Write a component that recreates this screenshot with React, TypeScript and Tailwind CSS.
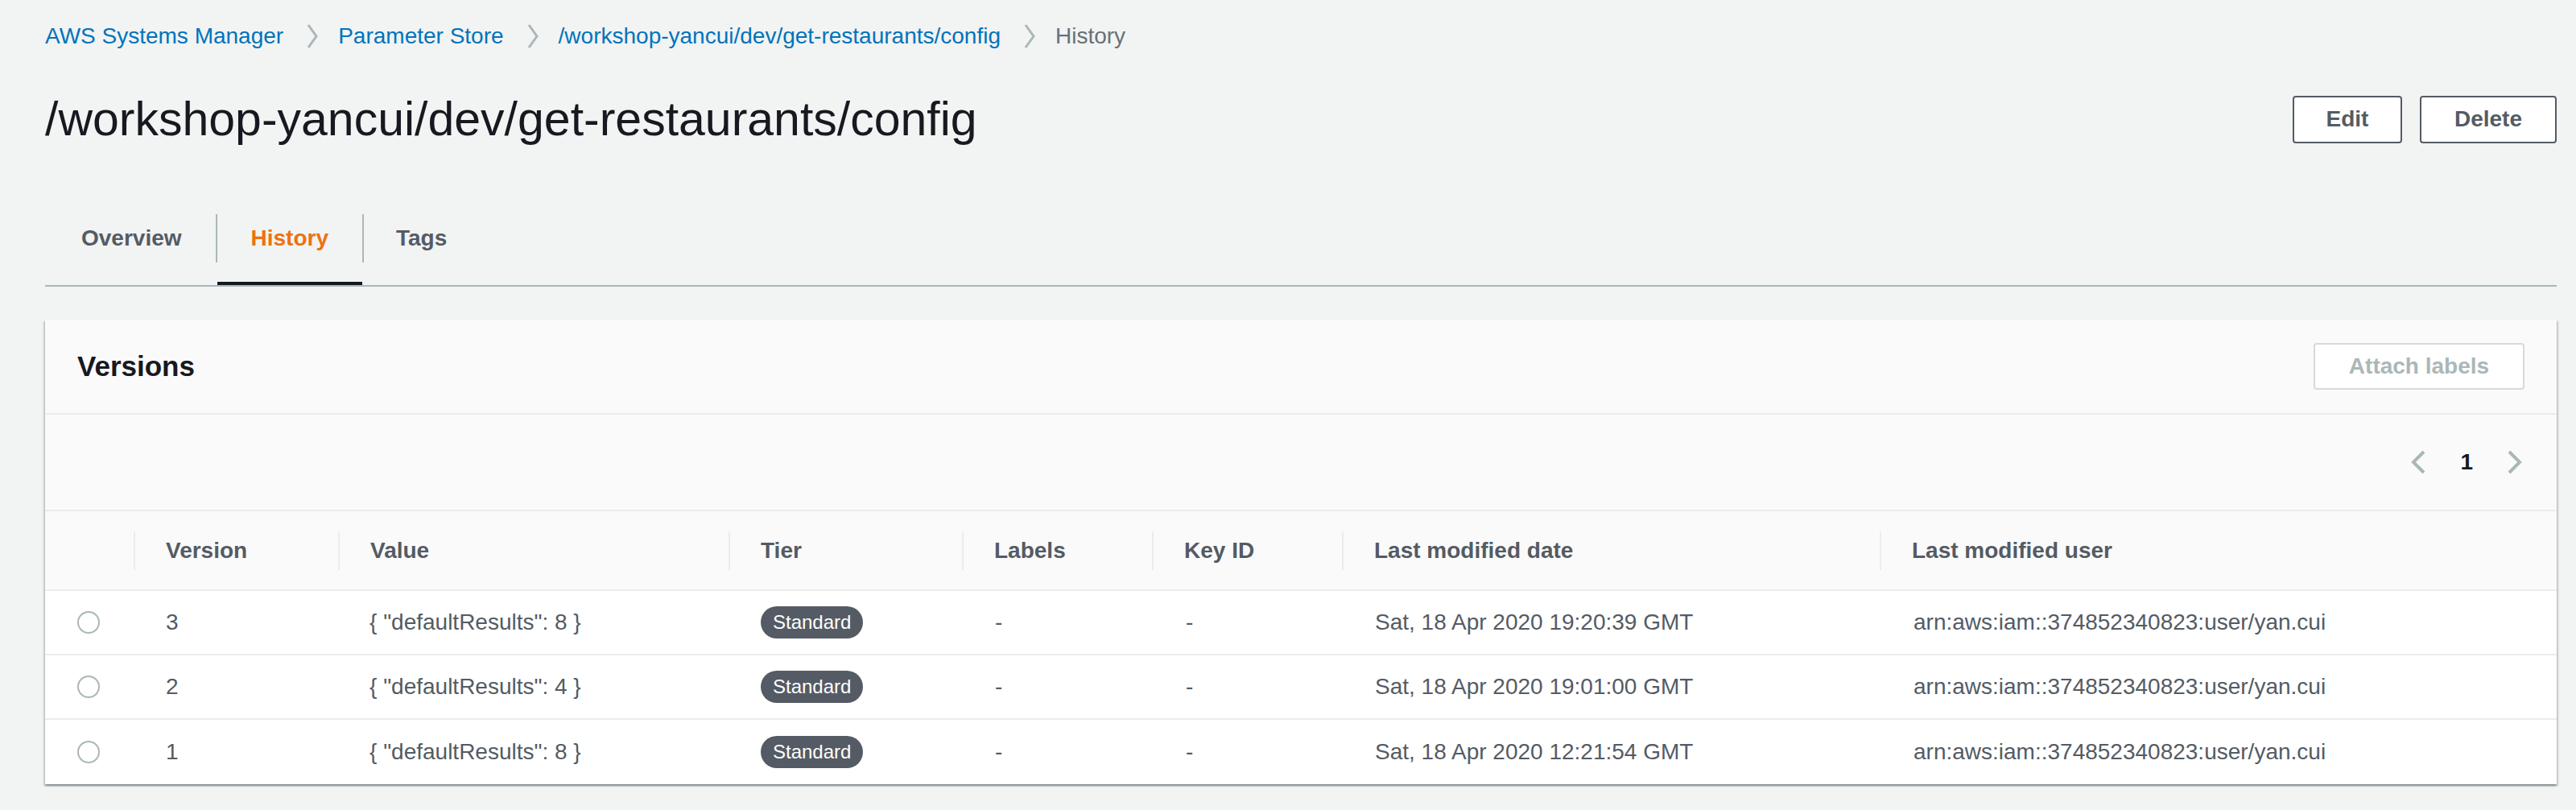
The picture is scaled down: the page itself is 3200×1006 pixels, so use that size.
import React from "react";

const Chevron = () => (
  <svg width="20" height="32" viewBox="0 0 20 32" className="shrink-0">
    <polyline points="5,2 15,16 5,30" fill="none" stroke="#aab7b8" strokeWidth="3" />
  </svg>
);

const rows = [
  { v: "3", val: '{ "defaultResults": 8 }', date: "Sat, 18 Apr 2020 19:20:39 GMT" },
  { v: "2", val: '{ "defaultResults": 4 }', date: "Sat, 18 Apr 2020 19:01:00 GMT" },
  { v: "1", val: '{ "defaultResults": 8 }', date: "Sat, 18 Apr 2020 12:21:54 GMT" },
];

const headers = ["Version", "Value", "Tier", "Labels", "Key ID", "Last modified date", "Last modified user"];

const cols = "grid grid-cols-[110px_254px_485px_290px_236px_236px_668px_1fr]";

export default function App() {
  return (
    <div className="min-h-[1006px] w-[3200px] bg-[#f2f3f3] pl-[56px] pr-[24px] pt-[25px] font-['Liberation_Sans',Arial,sans-serif] text-[28px]">
      {/* Breadcrumb */}
      <div className="flex h-[40px] items-center text-[28px] leading-[40px]">
        <span className="text-[#0073bb]">AWS Systems Manager</span>
        <span className="ml-[26px] mr-[22px] flex items-center"><Chevron /></span>
        <span className="text-[#0073bb]">Parameter Store</span>
        <span className="ml-[26px] mr-[22px] flex items-center"><Chevron /></span>
        <span className="text-[#0073bb]">/workshop-yancui/dev/get-restaurants/config</span>
        <span className="ml-[26px] mr-[22px] flex items-center"><Chevron /></span>
        <span className="text-[#687078]">History</span>
      </div>

      {/* Title row */}
      <div className="mt-[53px] flex h-[60px] items-center justify-between">
        <h1 className="text-[59px] leading-[60px] text-[#16191f] font-normal">/workshop-yancui/dev/get-restaurants/config</h1>
        <div className="flex gap-[22px]">
          <button className="h-[59px] w-[136px] rounded-[4px] border-2 border-[#545b64] bg-white text-[28px] font-bold text-[#545b64]">Edit</button>
          <button className="h-[59px] w-[170px] rounded-[4px] border-2 border-[#545b64] bg-white text-[28px] font-bold text-[#545b64]">Delete</button>
        </div>
      </div>

      {/* Tabs */}
      <div className="mt-[60px] flex border-b-2 border-[#aab7b8]">
        <div className="flex h-[116px] items-center pl-[45px] pr-[42px] font-bold text-[#545b64]">Overview</div>
        <div className="h-[60px] w-[2px] self-center bg-[#aab7b8]" />
        <div className="relative flex h-[116px] items-center px-[42px] font-bold text-[#ec7211]">
          History
          <div className="absolute bottom-0 left-0 right-0 h-[4px] bg-[#16191f]" />
        </div>
        <div className="h-[60px] w-[2px] self-center bg-[#aab7b8]" />
        <div className="flex h-[116px] items-center px-[40px] font-bold text-[#545b64]">Tags</div>
      </div>

      {/* Panel */}
      <div className="mt-[41px] bg-white shadow-[0_2px_2px_0_rgba(0,28,36,0.3),2px_2px_2px_0_rgba(0,28,36,0.15),-2px_2px_2px_0_rgba(0,28,36,0.15)]">
        <div className="flex h-[118px] items-center justify-between border-b-2 border-[#eaeded] bg-[#fafafa] px-[40px]">
          <h2 className="text-[35px] font-bold text-[#16191f]">Versions</h2>
          <button className="h-[58px] w-[262px] rounded-[4px] border-2 border-[#d5dbdb] bg-white text-[28px] font-bold text-[#aab7b8]">Attach labels</button>
        </div>
        <div className="flex h-[120px] items-center justify-end gap-[42px] border-b-2 border-[#eaeded] bg-[#fafafa] pr-[42px]">
          <svg width="20" height="32" viewBox="0 0 20 32">
            <polyline points="17,3 4,16 17,29" fill="none" stroke="#aab7b8" strokeWidth="4" />
          </svg>
          <span className="font-bold text-[#16191f]">1</span>
          <svg width="20" height="32" viewBox="0 0 20 32">
            <polyline points="3,3 16,16 3,29" fill="none" stroke="#aab7b8" strokeWidth="4" />
          </svg>
        </div>
        <div className={`${cols} h-[99px] border-b-2 border-[#eaeded] bg-[#fafafa]`}>
          <div />
          {headers.map((h) => (
            <div key={h} className="flex items-center">
              <span className="h-[48px] w-[2px] bg-[#eaeded]" />
              <span className="ml-[38px] font-bold text-[#545b64]">{h}</span>
            </div>
          ))}
        </div>
        {rows.map((r, i) => (
          <div key={r.v} className={`${cols} h-[80px] text-[#545b64] ${i < rows.length - 1 ? "border-b-2 border-[#eaeded]" : ""}`}>
            <div className="flex items-center pl-[40px]">
              <span className="h-[28px] w-[28px] rounded-full border-2 border-[#aab7b8] bg-white" />
            </div>
            <div className="flex items-center pl-[40px]">{r.v}</div>
            <div className="flex items-center pl-[39px]">{r.val}</div>
            <div className="flex items-center pl-[40px]">
              <span className="flex h-[40px] items-center rounded-full bg-[#545b64] px-[15px] text-[24px] text-white">Standard</span>
            </div>
            <div className="flex items-center pl-[41px]">-</div>
            <div className="flex items-center pl-[42px]">-</div>
            <div className="flex items-center pl-[41px]">{r.date}</div>
            <div className="flex items-center pl-[42px]">arn:aws:iam::374852340823:user/yan.cui</div>
          </div>
        ))}
      </div>
    </div>
  );
}
